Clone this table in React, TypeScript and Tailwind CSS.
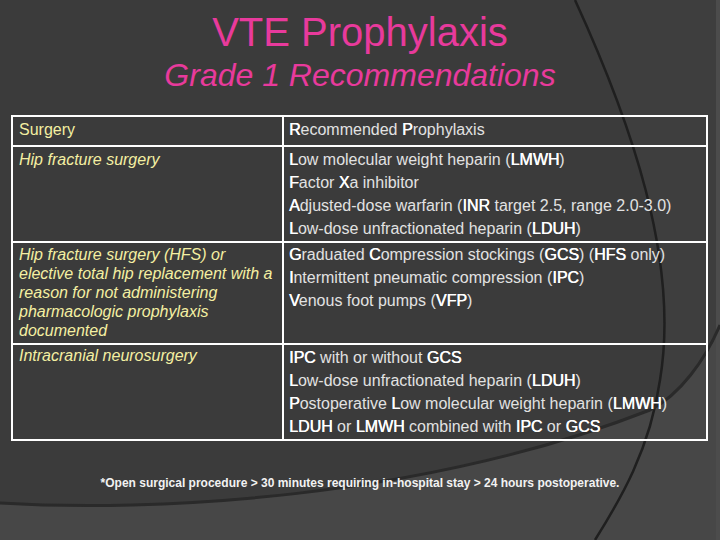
import React from "react";

// Right-hand column lines: bold initials / acronyms as on the slide
const hipFracture = [
  <><b>L</b>ow molecular weight heparin (<b>LMWH</b>)</>,
  <><b>F</b>actor <b>X</b>a inhibitor</>,
  <><b>A</b>djusted-dose warfarin (<b>INR</b> target 2.5, range 2.0-3.0)</>,
  <><b>L</b>ow-dose unfractionated heparin (<b>LDUH</b>)</>,
];

const hipReplacement = [
  <><b>G</b>raduated <b>C</b>ompression stockings (<b>GCS</b>) (<b>HFS</b> only)</>,
  <><b>I</b>ntermittent pneumatic compression (<b>IPC</b>)</>,
  <><b>V</b>enous foot pumps (<b>VFP</b>)</>,
];

const neuro = [
  <><b>IPC</b> with or without <b>GCS</b></>,
  <><b>L</b>ow-dose unfractionated heparin (<b>LDUH</b>)</>,
  <><b>P</b>ostoperative <b>L</b>ow molecular weight heparin (<b>LMWH</b>)</>,
  <><b>LDUH</b> or <b>LMWH</b> combined with <b>IPC</b> or <b>GCS</b></>,
];

function Backdrop() {
  return (
    <svg className="absolute inset-0" width="720" height="540" viewBox="0 0 720 540">
      <path d="M575,0 C630,120 680,260 660,380 C650,450 620,500 595,540 L716,540 L716,0 Z" fill="#3e3e3e" />
      <path d="M0,503 C150,512 420,500 650,410 C680,395 705,360 720,325 L720,540 L0,540 Z" fill="#474747" />
      <rect x="716" y="0" width="4" height="540" fill="#4c4c4c" />
      <path d="M575,0 C630,120 680,260 660,380 C650,450 620,500 595,540" fill="none" stroke="#1f1f1f" strokeWidth="2.5" />
      <path d="M0,503 C150,512 420,500 650,410 C680,395 705,360 720,325" fill="none" stroke="#2a2a2a" strokeWidth="3" />
    </svg>
  );
}

function Row({
  left,
  right,
  leftPad,
  rightPad,
  first,
  italic = true,
}: {
  left: React.ReactNode;
  right: React.ReactNode[];
  leftPad: string;
  rightPad: string;
  first?: boolean;
  italic?: boolean;
}) {
  return (
    <div className={`grid grid-cols-[271px_1fr] ${first ? "" : "border-t-2 border-white"}`}>
      <div className={`border-r-2 border-white pl-[6px] pr-[4px] text-[16px] leading-[19px] text-[#f4efa2] ${italic ? "italic" : ""} ${leftPad}`}>
        {left}
      </div>
      <div className={`pl-[5px] text-[16px] leading-[23px] text-[#e2e2e2] [&_b]:font-normal [&_b]:text-white [&_b]:[text-shadow:0.45px_0_0_#ffffff] ${rightPad}`}>
        {right.map((line, i) => (
          <div key={i}>{line}</div>
        ))}
      </div>
    </div>
  );
}

export default function App() {
  return (
    <div className="relative w-[720px] h-[540px] overflow-hidden bg-[#3b3b3b] font-['Liberation_Sans',Arial,sans-serif]">
      <Backdrop />
      <div className="relative flex flex-col">
        <h1 className="mt-[12px] text-center text-[40px] leading-[40px] text-[#e83a9c]">VTE Prophylaxis</h1>
        <h2 className="mt-[7px] text-center text-[32px] leading-[32px] italic text-[#e83a9c]">Grade 1 Recommendations</h2>

        <div className="mt-[24px] ml-[11px] w-[697px] border-2 border-white">
          <Row
            first
            italic={false}
            left="Surgery"
            right={[<><b>R</b>ecommended <b>P</b>rophylaxis</>]}
            leftPad="pt-[3px] pb-[4px]"
            rightPad="pt-[1px] pb-[4px]"
          />
          <Row
            left="Hip fracture surgery"
            right={hipFracture}
            leftPad="pt-[3px]"
            rightPad="pt-[1px] pb-[1px]"
          />
          <Row
            left="Hip fracture surgery (HFS) or elective total hip replacement with a reason for not administering pharmacologic prophylaxis documented"
            right={hipReplacement}
            leftPad="pt-[2px] pb-[3px]"
            rightPad="pt-0"
          />
          <Row
            left="Intracranial neurosurgery"
            right={neuro}
            leftPad="pt-[1px]"
            rightPad="pt-[1px] pb-[1px]"
          />
        </div>

        <p className="mt-[34px] text-center text-[12px] leading-[16px] font-bold text-[#f2f2f2]">
          *Open surgical procedure &gt; 30 minutes requiring in-hospital stay &gt; 24 hours postoperative.
        </p>
      </div>
    </div>
  );
}
